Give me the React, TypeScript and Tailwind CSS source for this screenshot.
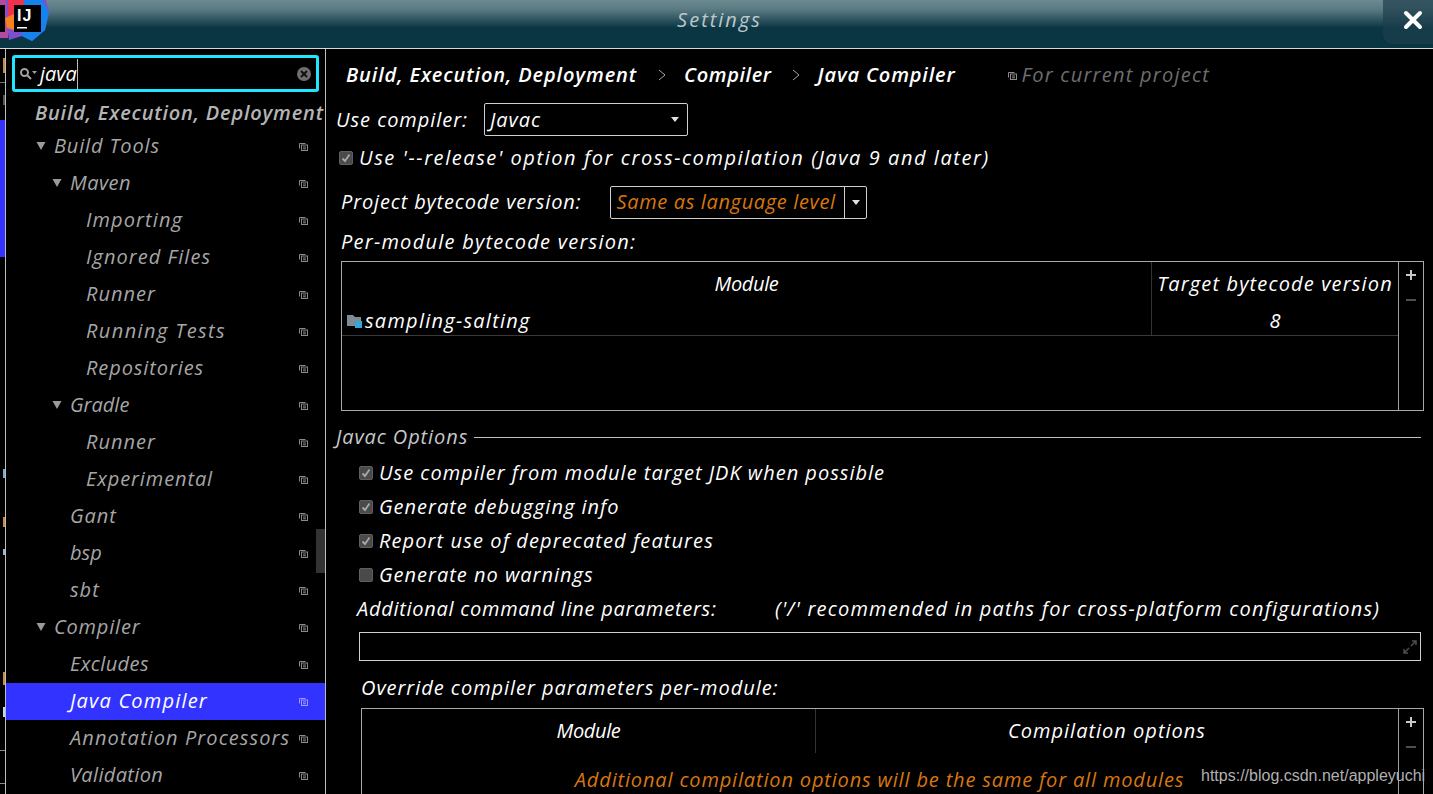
import React from "react";

const font = { fontFamily: "'Open Sans', 'Noto Sans', sans-serif" };

function Copy({ dim }: { dim?: boolean }) {
  return (
    <svg width="9" height="9" viewBox="0 0 9 9" className="shrink-0" fill="none" stroke={dim ? "#9a9aff" : "#8a8a8a"} strokeWidth="1">
      <path d="M6.5 1.5 H0.5 V6.5" />
      <rect x="2.5" y="3" width="6" height="5.5" />
      <path d="M4 5 H7 M4 6.8 H7" />
    </svg>
  );
}

function Tri({ size = 10 }: { size?: number }) {
  return (
    <svg width={size} height="8" viewBox="0 0 10 8" className="shrink-0">
      <path d="M0.5 0 H9.5 L5 8 Z" fill="#9a9a9a" />
    </svg>
  );
}

type Row = { t: string; lvl: number; arrow?: boolean; sel?: boolean; track: string };
const rows: Row[] = [
  { t: "Build Tools", lvl: 1, arrow: true, track: "tracking-[0.85px]" },
  { t: "Maven", lvl: 2, arrow: true, track: "tracking-[0.45px]" },
  { t: "Importing", lvl: 3, track: "tracking-[1.1px]" },
  { t: "Ignored Files", lvl: 3, track: "tracking-[1.05px]" },
  { t: "Runner", lvl: 3, track: "tracking-[1px]" },
  { t: "Running Tests", lvl: 3, track: "tracking-[1.4px]" },
  { t: "Repositories", lvl: 3, track: "tracking-[0.9px]" },
  { t: "Gradle", lvl: 2, arrow: true, track: "tracking-[0px]" },
  { t: "Runner", lvl: 3, track: "tracking-[1px]" },
  { t: "Experimental", lvl: 3, track: "tracking-[0.9px]" },
  { t: "Gant", lvl: 2, track: "tracking-[0.9px]" },
  { t: "bsp", lvl: 2, track: "tracking-[0px]" },
  { t: "sbt", lvl: 2, track: "tracking-[1px]" },
  { t: "Compiler", lvl: 1, arrow: true, track: "tracking-[0.8px]" },
  { t: "Excludes", lvl: 2, track: "tracking-[0.4px]" },
  { t: "Java Compiler", lvl: 2, sel: true, track: "tracking-[1.2px]" },
  { t: "Annotation Processors", lvl: 2, track: "tracking-[1.08px]" },
  { t: "Validation", lvl: 2, track: "tracking-[0.35px]" },
];

function TreeRow({ r }: { r: Row }) {
  const pad = r.lvl === 1 ? "pl-[30px]" : r.lvl === 2 ? "pl-[46px]" : "pl-[80px]";
  const gap = r.arrow ? "gap-2" : "gap-0";
  return (
    <div className={`h-[37px] shrink-0 flex items-center pr-[17px] ${r.sel ? "bg-[#3333ff] text-white" : "text-[#a6a6a6]"}`}>
      <div className={`flex-1 flex items-center pb-[2px] ${gap} ${r.arrow ? pad : r.lvl === 2 ? "pl-[64px]" : pad} text-[20px] italic ${r.track} whitespace-nowrap`}>
        {r.arrow && <Tri />}
        <span>{r.t}</span>
      </div>
      <Copy dim={r.sel} />
    </div>
  );
}

function Check({ on }: { on: boolean }) {
  return (
    <span className="w-[14px] h-[14px] rounded-[2px] bg-[#4a4a4a] border border-[#5f5f5f] flex items-center justify-center shrink-0">
      {on && (
        <svg width="10" height="10" viewBox="0 0 10 10" fill="none" stroke="#a8a8a8" strokeWidth="1.8">
          <path d="M1.5 5.5 L4 8 L8.5 1.5" />
        </svg>
      )}
    </span>
  );
}

function Option({ on, label, track }: { on: boolean; label: string; track: string }) {
  return (
    <div className="h-[34px] flex items-center gap-[6px] pl-[23px]">
      <Check on={on} />
      <span className={`text-[20px] italic text-white whitespace-nowrap ${track}`}>{label}</span>
    </div>
  );
}

function PlusMinus() {
  return (
    <div className="w-[25px] shrink-0 border-l border-[#a0a0a0] flex flex-col items-center pt-[7px] gap-[13px]">
      <svg width="12" height="12" viewBox="0 0 12 12" stroke="#c8c8c8" strokeWidth="2"><path d="M6 1 V11 M1 6 H11" /></svg>
      <svg width="12" height="12" viewBox="0 0 12 12" stroke="#4e4e4e" strokeWidth="2"><path d="M1 6 H11" /></svg>
    </div>
  );
}

function Logo() {
  return (
    <svg width="52" height="42" viewBox="0 0 52 42" className="shrink-0">
      <path d="M0 0 H8 V38 H0 Z" fill="#b34aa0" />
      <path d="M6 0 H46 L49 12 L45 30 L32 41 L22 36 L9 40 L6 20 Z" fill="#7b4fd0" />
      <path d="M8 0 H30 L24 18 L8 26 Z" fill="#f0304f" />
      <path d="M24 0 H42 L49 12 L45 30 L32 41 L22 36 Z" fill="#1483ee" />
      <path d="M5 18 L14 14 L14 30 L7 28 Z" fill="#f58220" />
      <rect x="14" y="5" width="27" height="27" fill="#000" />
      <rect x="0" y="5" width="5" height="27" fill="#000" />
      <rect x="17" y="27" width="10" height="1.5" fill="#fff" />
      <text x="17" y="21" fill="#fff" fontSize="16" fontWeight="700" letterSpacing="1" fontFamily="'Liberation Sans', sans-serif">IJ</text>
    </svg>
  );
}

export default function App() {
  return (
    <div className="w-[1433px] h-[794px] overflow-hidden bg-black flex flex-col" style={font}>
      <div className="h-[49px] shrink-0 border-b border-[#d8d8d8] flex items-start bg-[linear-gradient(#6c8a92_0%,#5a7a82_20%,#0a3644_58%,#0a3644_100%)]">
        <Logo />
        <div className="flex-1 h-full flex items-center justify-center pb-[8px] pl-[4px] text-[20px] italic text-[#bcc8cc] tracking-[2px]">Settings</div>
        <div className="w-[50px] h-[44px] rounded-bl-[10px] bg-[#1c3f4b]/70 flex items-center justify-center pl-[10px] pb-[4px]">
          <svg width="20" height="20" viewBox="0 0 20 20" stroke="#fff" strokeWidth="4" strokeLinecap="round"><path d="M3 3 L17 17 M17 3 L3 17" /></svg>
        </div>
      </div>
      <div className="flex-1 min-h-0 flex">
        <div className="w-[6px] shrink-0 flex flex-col border-r border-[#bdbdbd]">
          <div className="h-[9px]" />
          <div className="h-[15px] w-[2px] ml-auto bg-[#c98a3a]" />
          <div className="h-[9px]" />
          <div className="h-px bg-[#777777]" />
          <div className="h-[12px]" />
          <div className="h-[10px] w-[2px] ml-auto bg-[#555555]" />
          <div className="h-[15px]" />
          <div className="h-[137px] bg-[#3333ff]" />
          <div className="h-[212px]" />
          <div className="h-[9px] w-[2px] ml-auto bg-[#7fa8d0]" />
          <div className="h-[39px]" />
          <div className="h-[10px] w-[2px] ml-auto bg-[#d08a40]" />
          <div className="h-[22px]" />
          <div className="h-[6px] w-[2px] ml-auto bg-[#8fb8e0]" />
          <div className="h-[117px]" />
          <div className="h-[13px] w-[2px] ml-auto bg-[#d08a40]" />
          <div className="h-[22px]" />
          <div className="h-[10px] w-[2px] ml-auto bg-[#bcd8f0]" />
          <div className="h-[33px]" />
          <div className="h-px bg-[#8a8a8a]" />
          <div className="h-[32px]" />
          <div className="h-px bg-[#8a8a8a]" />
          <div className="flex-1" />
        </div>
        <div className="w-[320px] shrink-0 border-r border-[#bdbdbd] flex flex-col relative">
          <div className="mx-[6px] mt-[6px] h-[37px] shrink-0 rounded-[3px] border-[3px] border-[#1fe5ff] flex items-center pl-[4px] pr-[5px]">
            <svg width="20" height="14" viewBox="0 0 20 14" fill="none" className="shrink-0">
              <circle cx="5.5" cy="5.5" r="3.5" stroke="#a0a0a0" strokeWidth="2" />
              <path d="M8 8 L12 12" stroke="#a0a0a0" strokeWidth="2" />
              <path d="M13 4 H18 L15.5 7 Z" fill="#a0a0a0" />
            </svg>
            <span className="text-[20px] italic text-white tracking-[0px] border-r border-[#bbbbbb] leading-[30px] ml-[1px]">java</span>
            <span className="flex-1" />
            <span className="w-[14px] h-[14px] rounded-full bg-[#6f6f6f] flex items-center justify-center">
              <svg width="8" height="8" viewBox="0 0 8 8" stroke="#111" strokeWidth="2"><path d="M1 1 L7 7 M7 1 L1 7" /></svg>
            </span>
          </div>
          <div className="h-[36px] shrink-0 flex items-center pt-[6px] pl-[29px] text-[20px] font-semibold italic text-[#b4b4b4] tracking-[0.8px] whitespace-nowrap">Build, Execution, Deployment</div>
          {rows.map((r, i) => (
            <TreeRow key={i} r={r} />
          ))}
          <div className="absolute right-0 top-[480px] w-[9px] h-[44px] bg-[#333333]" />
        </div>
        <div className="flex-1 min-w-0 flex flex-col pl-[10px] pr-[9px] relative">
          <div className="h-[52px] shrink-0 flex items-center pl-[10px] text-[20px] italic font-semibold text-white whitespace-nowrap">
            <span className="tracking-[0.88px]">Build, Execution, Deployment</span>
            <svg width="8" height="12" viewBox="0 0 8 12" fill="none" stroke="#a8a8a8" className="ml-[21px] mr-[18px]"><path d="M1 1 L7 6 L1 11" /></svg>
            <span className="tracking-[0.6px]">Compiler</span>
            <svg width="8" height="12" viewBox="0 0 8 12" fill="none" stroke="#a8a8a8" className="ml-[20px] mr-[18px]"><path d="M1 1 L7 6 L1 11" /></svg>
            <span className="tracking-[0.85px]">Java Compiler</span>
            <span className="ml-[53px] flex items-center gap-[4px] font-normal text-[#6e6e6e] tracking-[1.25px]"><Copy />For current project</span>
          </div>
          <div className="h-[34px] shrink-0 flex items-center mt-[1px] text-[20px] italic text-white tracking-[0.95px] whitespace-nowrap">
            <span className="mt-[2px]">Use compiler:</span>
            <div className="ml-[16px] w-[204px] h-[33px] rounded-[2px] border border-[#d0d0d0] flex items-center justify-between pl-[5px] pr-[8px]">
              <span className="mt-[2px]">Javac</span>
              <svg width="8" height="5" viewBox="0 0 8 5"><path d="M0 0 H8 L4 5 Z" fill="#e0e0e0" /></svg>
            </div>
          </div>
          <div className="h-[44px] shrink-0 flex items-center gap-[6px] pl-[3px] text-[20px] italic text-white tracking-[1.57px] whitespace-nowrap">
            <Check on />
            <span>Use '--release' option for cross-compilation (Java 9 and later)</span>
          </div>
          <div className="h-[44px] shrink-0 flex items-center pl-[5px] text-[20px] italic text-white tracking-[0.85px] whitespace-nowrap">
            <span>Project bytecode version:</span>
            <div className="ml-[29px] w-[257px] h-[33px] rounded-[2px] border border-[#d0d0d0] flex items-center pl-[5px]">
              <span className="flex-1 text-[#d9770f] tracking-[0.65px]">Same as language level</span>
              <span className="w-[22px] h-full border-l border-[#d0d0d0] flex items-center justify-center">
                <svg width="8" height="5" viewBox="0 0 8 5"><path d="M0 0 H8 L4 5 Z" fill="#e0e0e0" /></svg>
              </span>
            </div>
          </div>
          <div className="h-[37px] shrink-0 flex items-center pl-[5px] pb-[2px] text-[20px] italic text-white tracking-[1.25px] whitespace-nowrap">Per-module bytecode version:</div>
          <div className="ml-[5px] h-[150px] shrink-0 border border-[#a8a8a8] flex">
            <div className="flex-1 min-w-0 flex flex-col text-[20px] italic text-white">
              <div className="h-[37px] shrink-0 flex">
                <div className="w-[810px] flex items-center justify-center pt-[6px] border-r border-[#333333] tracking-[-0.35px]">Module</div>
                <div className="flex-1 flex items-center justify-center pt-[6px] whitespace-nowrap tracking-[1.15px]">Target bytecode version</div>
              </div>
              <div className="h-[37px] shrink-0 flex border-b border-[#3a3a3a]">
                <div className="w-[810px] flex items-center gap-[3px] pl-[5px] pt-[8px] border-r border-[#333333]">
                  <svg width="15" height="14" viewBox="0 0 15 14">
                    <path d="M0 1 H6 L8 3 H14 V12 H0 Z" fill="#7f8b91" />
                    <rect x="8" y="7" width="7" height="7" fill="#33a7d8" />
                  </svg>
                  <span className="tracking-[1.25px]">sampling-salting</span>
                </div>
                <div className="flex-1 flex items-center justify-center pt-[8px]">8</div>
              </div>
            </div>
            <PlusMinus />
          </div>
          <div className="h-[52px] shrink-0 flex items-center gap-[6px] mr-[3px] text-[20px] italic text-[#c8c8c8] tracking-[0.9px] whitespace-nowrap">
            <span>Javac Options</span>
            <div className="flex-1 h-px bg-[#bdbdbd]" />
          </div>
          <div className="flex flex-col mt-[-7px]">
            <Option on label="Use compiler from module target JDK when possible" track="tracking-[1px]" />
            <Option on label="Generate debugging info" track="tracking-[1px]" />
            <Option on label="Report use of deprecated features" track="tracking-[1.1px]" />
            <Option on={false} label="Generate no warnings" track="tracking-[1px]" />
          </div>
          <div className="h-[34px] shrink-0 flex items-center pl-[21px] text-[20px] italic text-white whitespace-nowrap">
            <span className="w-[418px] tracking-[0.72px]">Additional command line parameters:</span>
            <span className="tracking-[1.19px]">('/' recommended in paths for cross-platform configurations)</span>
          </div>
          <div className="ml-[23px] mr-[3px] mt-[6px] h-[29px] shrink-0 border border-[#d0d0d0] flex items-center justify-end pr-[3px]">
            <svg width="14" height="14" viewBox="0 0 14 14" fill="none" stroke="#4e4e4e" strokeWidth="1.5">
              <path d="M8 6 L13 1 M9 1 H13 V5 M6 8 L1 13 M1 9 V13 H5" />
            </svg>
          </div>
          <div className="h-[47px] shrink-0 flex items-end pb-[5px] pl-[25px] text-[20px] italic text-white tracking-[0.97px] whitespace-nowrap">Override compiler parameters per-module:</div>
          <div className="ml-[25px] h-[120px] shrink-0 border border-[#a8a8a8] flex relative">
            <div className="flex-1 min-w-0 flex flex-col text-[20px] italic text-white">
              <div className="h-[44px] shrink-0 flex">
                <div className="w-[454px] flex items-center justify-center border-r border-[#333333] tracking-[-0.35px]">Module</div>
                <div className="flex-1 flex items-center justify-center tracking-[1px]">Compilation options</div>
              </div>
              <div className="text-center text-[#d9770f] mt-[12px] pr-[1px] whitespace-nowrap tracking-[0.84px]">Additional compilation options will be the same for all modules</div>
            </div>
            <PlusMinus />
            <span className="absolute left-[839px] top-[55px] text-[16px] not-italic text-[#b0b0b0] tracking-normal whitespace-nowrap" style={{ fontFamily: "'Liberation Sans', sans-serif" }}>https://blog.csdn.net/appleyuchi</span>
          </div>
        </div>
      </div>
    </div>
  );
}
